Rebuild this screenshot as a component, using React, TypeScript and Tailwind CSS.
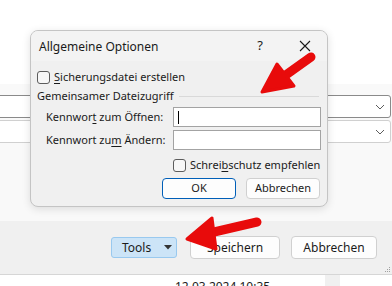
import React from 'react';

const U: React.FC<{ children: React.ReactNode }> = ({ children }) => (
  <span className="underline underline-offset-2">{children}</span>
);

const Checkbox: React.FC = () => (
  <span className="inline-block shrink-0 w-[13px] h-[13px] rounded-[3px] border border-[#5c5c5c] bg-[#f7f7f7]" />
);

const Chevron: React.FC = () => (
  <svg width="10" height="6" viewBox="0 0 10 6" className="text-[#5c5c5c]">
    <path d="M1 1 L5 5 L9 1" fill="none" stroke="currentColor" strokeWidth="1" />
  </svg>
);

const Dialog: React.FC = () => (
  <div className="absolute left-[30px] top-[30px] w-[298px] h-[177px] rounded-[8px] border border-[#c4c4c4] bg-[#f0f0f0] shadow-[0_2px_8px_rgba(0,0,0,0.12)] overflow-hidden whitespace-nowrap">
    <div className="h-[30px] bg-[#f3f3f3] flex items-center pl-[8px] text-[12px] text-[#1a1a1a]">
      <span className="flex-1 pt-[1px]">Allgemeine Optionen</span>
      <span className="w-[16px] text-[13px] text-center mr-[31px]">?</span>
      <svg width="12" height="12" viewBox="0 0 12 12" className="mr-[16px]">
        <path d="M1 1 L11 11 M11 1 L1 11" stroke="#1a1a1a" strokeWidth="1.1" />
      </svg>
    </div>
    <div className="flex flex-col px-[6px] text-[11px] text-[#1a1a1a]">
      <div className="flex items-center gap-[4px] mt-[9px] h-[14px]">
        <Checkbox />
        <span>
          <U>S</U>icherungsdatei erstellen
        </span>
      </div>
      <div className="flex items-center mt-[4px] h-[16px] gap-[5px]">
        <span>Gemeinsamer Dateizugriff</span>
        <div className="flex-1 h-px bg-[#d9d9d9] mr-[2px]" />
      </div>
      <div className="flex items-center mt-[3px] h-[20px]">
        <span className="w-[136px] pl-[9px]">
          Kennwor<U>t</U> zum Öffnen:
        </span>
        <div className="w-[148px] h-[20px] bg-white border border-[#a3a3a3] flex items-center pl-[4px]">
          <div className="w-px h-[13px] bg-black" />
        </div>
      </div>
      <div className="flex items-center mt-[3px] h-[20px]">
        <span className="w-[136px] pl-[9px]">
          Kennwort zu<U>m</U> Ändern:
        </span>
        <div className="w-[148px] h-[20px] bg-white border border-[#a3a3a3]" />
      </div>
      <div className="flex items-center gap-[4px] mt-[8px] h-[14px] pl-[136px]">
        <Checkbox />
        <span>
          Schrei<U>b</U>schutz empfehlen
        </span>
      </div>
      <div className="flex justify-end gap-[10px] mt-[6px] pr-[1px]">
        <button className="w-[74px] h-[21px] rounded-[4px] border border-[#005fb8] bg-[#fdfdfd] text-[11px]">
          OK
        </button>
        <button className="w-[74px] h-[21px] rounded-[4px] border border-[#d0d0d0] bg-[#fdfdfd] text-[11px]">
          Abbrechen
        </button>
      </div>
    </div>
  </div>
);

const Arrows: React.FC = () => (
  <svg className="absolute inset-0 pointer-events-none" width="392" height="286" viewBox="0 0 392 286">
    <g fill="#e80b0b" stroke="#e80b0b" strokeLinejoin="round" strokeLinecap="round">
      <line x1="311" y1="57" x2="283" y2="77" strokeWidth="9" />
      <polygon points="262,92 277,64 294,86" strokeWidth="3" />
      <line x1="257" y1="222" x2="214" y2="232" strokeWidth="9" />
      <polygon points="187,239 212,218 216,249" strokeWidth="3" />
    </g>
  </svg>
);

export default function App() {
  return (
    <div
      className="relative w-[392px] h-[286px] overflow-hidden bg-white text-[#1a1a1a] whitespace-nowrap"
      style={{ fontFamily: '"Noto Sans", "Segoe UI", sans-serif' }}
    >
      <div className="h-[84px] bg-white" />
      <div className="h-[137px] bg-[#f9f9f9] flex flex-col pt-[11px] gap-[2px]">
        <div className="h-[23px] ml-[-10px] mr-[1px] bg-white border border-[#8a8a8a] rounded-[3px] flex items-center justify-end pr-[5px]">
          <Chevron />
        </div>
        <div className="h-[23px] ml-[-10px] mr-[1px] bg-white border border-[#d0d0d0] rounded-[3px] flex items-center justify-end pr-[5px]">
          <Chevron />
        </div>
      </div>
      <div className="relative h-[54px] bg-[#f0f0f0] border-b border-[#d6d6d6] flex items-center justify-end pr-[15px] gap-[11px] text-[11px]">
        <button className="w-[66px] h-[21px] mr-[2px] rounded-[3px] border border-[#99c9ef] bg-[#cce4f7] flex items-center pl-[10px]">
          <span className="flex-1 text-left text-[12px]">Tools</span>
          <svg width="8" height="5" viewBox="0 0 8 5" className="mr-[4px]">
            <path d="M0 0 L8 0 L4 4.5 Z" fill="#333" />
          </svg>
        </button>
        <button className="w-[90px] h-[23px] rounded-[4px] border border-[#d0d0d0] bg-[#fdfdfd] text-[12px]">Speichern</button>
        <button className="w-[86px] h-[23px] rounded-[4px] border border-[#d0d0d0] bg-[#fdfdfd] text-[12px]">Abbrechen</button>
        <div className="absolute right-[2px] bottom-[2px] grid grid-cols-3 gap-[1px]">
          {[0, 0, 1, 0, 1, 1, 1, 1, 1].map((v, i) => (
            <span key={i} className={v ? 'w-[1px] h-[1px] bg-[#a0a0a0]' : 'w-[1px] h-[1px]'} />
          ))}
        </div>
      </div>
      <div className="flex h-[12px]">
        <div className="w-[325px] pl-[175px] pt-[5px] text-[12px] leading-[14px] text-[#1a1a1a]">12.03.2024 10:35</div>
        <div className="w-[15px] bg-[#f0f0f0]" />
      </div>
      <Dialog />
      <Arrows />
    </div>
  );
}
